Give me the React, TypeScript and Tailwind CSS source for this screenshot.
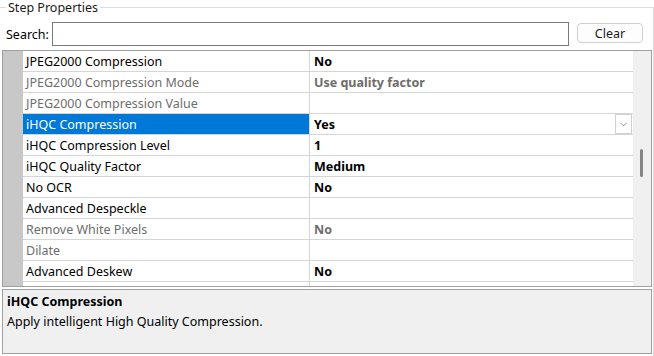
import { ChevronDown } from 'lucide-react';

type Row = {
  name: string;
  value?: string;
  disabled?: boolean;
  selected?: boolean;
};

const rows: Row[] = [
  { name: 'JPEG2000 Compression', value: 'No' },
  { name: 'JPEG2000 Compression Mode', value: 'Use quality factor', disabled: true },
  { name: 'JPEG2000 Compression Value', disabled: true },
  { name: 'iHQC Compression', value: 'Yes', selected: true },
  { name: 'iHQC Compression Level', value: '1' },
  { name: 'iHQC Quality Factor', value: 'Medium' },
  { name: 'No OCR', value: 'No' },
  { name: 'Advanced Despeckle' },
  { name: 'Remove White Pixels', value: 'No', disabled: true },
  { name: 'Dilate', disabled: true },
  { name: 'Advanced Deskew', value: 'No' },
  // next row is scrolled out of view, only its top edge shows
  { name: '' },
];

function PropertyRow({ row }: { row: Row }) {
  return (
    <div className="flex h-[21px] shrink-0">
      {/* name cell */}
      <div
        className={`w-[287px] shrink-0 border-b border-r border-[#d5d5d5] pl-[3px] pt-[1px] leading-[20px] ${
          row.selected ? 'bg-[#0078d7] text-white' : row.disabled ? 'text-[#6d6d6d]' : 'text-[#000]'
        }`}
      >
        {row.name}
      </div>
      {/* value cell */}
      <div
        className={`flex flex-1 items-start border-b border-[#d5d5d5] pl-[4px] font-bold leading-[20px] ${
          row.disabled ? 'text-[#6d6d6d]' : 'text-black'
        }`}
      >
        <span className="flex-1 pt-[1px]">{row.value}</span>
        {row.selected && (
          <div className="mr-[1px] flex h-[20px] w-[17px] items-center justify-center border border-[#d0d0d0] bg-white">
            <ChevronDown className="h-[11px] w-[11px] text-[#606060]" strokeWidth={1.5} />
          </div>
        )}
      </div>
    </div>
  );
}

export default function App() {
  return (
    <div
      className="h-[356px] w-[654px] overflow-hidden bg-white text-[12.5px] text-black"
      style={{ fontFamily: '"Noto Sans", "Open Sans", sans-serif' }}
    >
      {/* Group box */}
      <div className="relative mt-[7px] h-[349px] border-r border-t border-[#dcdcdc]">
        <span className="absolute left-[6px] top-[-7px] bg-white px-[2px] leading-[14px] text-[#1a1a1a]">
          Step Properties
        </span>

        {/* Search row */}
        <div className="flex items-start pl-[6px] pr-[10px] pt-[14px]">
          <span className="w-[46px] pt-[1px] leading-[24px]">Search:</span>
          <input
            className="h-[24px] w-[517px] border border-[#7a7a7a] bg-white px-1 outline-none"
            type="text"
          />
          <button className="ml-[8px] mt-[1px] h-[20px] w-[66px] rounded-[4px] border border-[#d0d0d0] bg-[#fdfdfd] pt-[1px] leading-[17px] text-[#1a1a1a]">
            Clear
          </button>
        </div>

        {/* Property grid */}
        <div className="ml-[2px] mt-[3px] flex h-[237px] w-[650px] border border-[#a0a0a0] bg-white">
          <div className="w-[20px] shrink-0 bg-[#c8c8c8]" />
          <div className="flex w-[610px] flex-col overflow-hidden">
            {rows.map((r, i) => (
              <PropertyRow key={i} row={r} />
            ))}
          </div>
          {/* scrollbar */}
          <div className="relative w-[18px] shrink-0 bg-[#f0f0f0]">
            <div className="absolute left-[7px] top-[98px] h-[28px] w-[3px] rounded-full bg-[#858585]" />
          </div>
        </div>

        {/* Description panel */}
        <div className="ml-[2px] mt-[2px] flex h-[65px] w-[650px] flex-col border border-[#a0a0a0] bg-[#f0f0f0] pl-[4px] pt-[2px]">
          <div className="font-bold leading-[19px]">iHQC Compression</div>
          <div className="mt-[1px] leading-[19px]">Apply intelligent High Quality Compression.</div>
        </div>
      </div>
    </div>
  );
}
